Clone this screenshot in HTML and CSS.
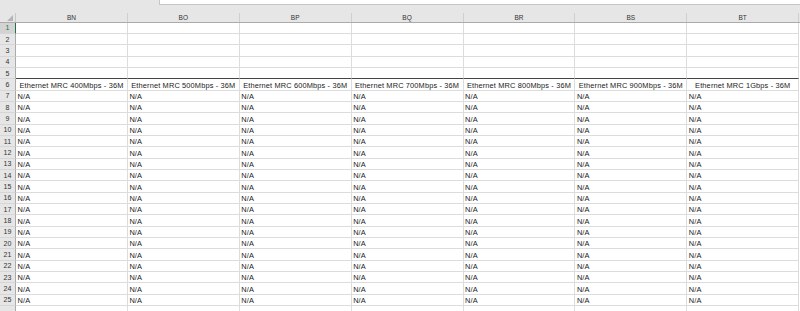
FILE: index.html
```html
<!DOCTYPE html>
<html lang="en">
<head>
  <meta charset="UTF-8">
  <title>Sheet1</title>
  <link rel="stylesheet" href="styles.css">
</head>
<body>
  <!-- formula bar strip -->
  <div class="ribbon">
    <div class="formula"></div>
  </div>

  <!-- column letters -->
  <div class="row colhead">
    <div class="corner">
      <svg width="6" height="6" viewBox="0 0 6 6"><polygon points="6,0 6,6 0,6" fill="#b4b4b4"/></svg>
    </div>
    <div class="col">BN</div><div class="col">BO</div><div class="col">BP</div><div class="col">BQ</div><div class="col">BR</div><div class="col">BS</div><div class="col">BT</div>
  </div>

  <div class="sheet">
    <div class="row"><div class="num active">1</div><div class="cell"></div><div class="cell"></div><div class="cell"></div><div class="cell"></div><div class="cell"></div><div class="cell"></div><div class="cell"></div></div>
    <div class="row"><div class="num">2</div><div class="cell"></div><div class="cell"></div><div class="cell"></div><div class="cell"></div><div class="cell"></div><div class="cell"></div><div class="cell"></div></div>
    <div class="row"><div class="num">3</div><div class="cell"></div><div class="cell"></div><div class="cell"></div><div class="cell"></div><div class="cell"></div><div class="cell"></div><div class="cell"></div></div>
    <div class="row"><div class="num">4</div><div class="cell"></div><div class="cell"></div><div class="cell"></div><div class="cell"></div><div class="cell"></div><div class="cell"></div><div class="cell"></div></div>
    <div class="row ruled"><div class="num">5</div><div class="cell"></div><div class="cell"></div><div class="cell"></div><div class="cell"></div><div class="cell"></div><div class="cell"></div><div class="cell"></div></div>
    <div class="row titles">
      <div class="num">6</div>
      <div class="cell">Ethernet MRC 400Mbps - 36M</div>
      <div class="cell">Ethernet MRC 500Mbps - 36M</div>
      <div class="cell">Ethernet MRC 600Mbps - 36M</div>
      <div class="cell">Ethernet MRC 700Mbps - 36M</div>
      <div class="cell">Ethernet MRC 800Mbps - 36M</div>
      <div class="cell">Ethernet MRC 900Mbps - 36M</div>
      <div class="cell">Ethernet MRC 1Gbps - 36M</div>
    </div>
    <div class="row"><div class="num">7</div><div class="cell">N/A</div><div class="cell">N/A</div><div class="cell">N/A</div><div class="cell">N/A</div><div class="cell">N/A</div><div class="cell">N/A</div><div class="cell">N/A</div></div>
    <div class="row"><div class="num">8</div><div class="cell">N/A</div><div class="cell">N/A</div><div class="cell">N/A</div><div class="cell">N/A</div><div class="cell">N/A</div><div class="cell">N/A</div><div class="cell">N/A</div></div>
    <div class="row"><div class="num">9</div><div class="cell">N/A</div><div class="cell">N/A</div><div class="cell">N/A</div><div class="cell">N/A</div><div class="cell">N/A</div><div class="cell">N/A</div><div class="cell">N/A</div></div>
    <div class="row"><div class="num">10</div><div class="cell">N/A</div><div class="cell">N/A</div><div class="cell">N/A</div><div class="cell">N/A</div><div class="cell">N/A</div><div class="cell">N/A</div><div class="cell">N/A</div></div>
    <div class="row"><div class="num">11</div><div class="cell">N/A</div><div class="cell">N/A</div><div class="cell">N/A</div><div class="cell">N/A</div><div class="cell">N/A</div><div class="cell">N/A</div><div class="cell">N/A</div></div>
    <div class="row"><div class="num">12</div><div class="cell">N/A</div><div class="cell">N/A</div><div class="cell">N/A</div><div class="cell">N/A</div><div class="cell">N/A</div><div class="cell">N/A</div><div class="cell">N/A</div></div>
    <div class="row"><div class="num">13</div><div class="cell">N/A</div><div class="cell">N/A</div><div class="cell">N/A</div><div class="cell">N/A</div><div class="cell">N/A</div><div class="cell">N/A</div><div class="cell">N/A</div></div>
    <div class="row"><div class="num">14</div><div class="cell">N/A</div><div class="cell">N/A</div><div class="cell">N/A</div><div class="cell">N/A</div><div class="cell">N/A</div><div class="cell">N/A</div><div class="cell">N/A</div></div>
    <div class="row"><div class="num">15</div><div class="cell">N/A</div><div class="cell">N/A</div><div class="cell">N/A</div><div class="cell">N/A</div><div class="cell">N/A</div><div class="cell">N/A</div><div class="cell">N/A</div></div>
    <div class="row"><div class="num">16</div><div class="cell">N/A</div><div class="cell">N/A</div><div class="cell">N/A</div><div class="cell">N/A</div><div class="cell">N/A</div><div class="cell">N/A</div><div class="cell">N/A</div></div>
    <div class="row"><div class="num">17</div><div class="cell">N/A</div><div class="cell">N/A</div><div class="cell">N/A</div><div class="cell">N/A</div><div class="cell">N/A</div><div class="cell">N/A</div><div class="cell">N/A</div></div>
    <div class="row"><div class="num">18</div><div class="cell">N/A</div><div class="cell">N/A</div><div class="cell">N/A</div><div class="cell">N/A</div><div class="cell">N/A</div><div class="cell">N/A</div><div class="cell">N/A</div></div>
    <div class="row"><div class="num">19</div><div class="cell">N/A</div><div class="cell">N/A</div><div class="cell">N/A</div><div class="cell">N/A</div><div class="cell">N/A</div><div class="cell">N/A</div><div class="cell">N/A</div></div>
    <div class="row"><div class="num">20</div><div class="cell">N/A</div><div class="cell">N/A</div><div class="cell">N/A</div><div class="cell">N/A</div><div class="cell">N/A</div><div class="cell">N/A</div><div class="cell">N/A</div></div>
    <div class="row"><div class="num">21</div><div class="cell">N/A</div><div class="cell">N/A</div><div class="cell">N/A</div><div class="cell">N/A</div><div class="cell">N/A</div><div class="cell">N/A</div><div class="cell">N/A</div></div>
    <div class="row"><div class="num">22</div><div class="cell">N/A</div><div class="cell">N/A</div><div class="cell">N/A</div><div class="cell">N/A</div><div class="cell">N/A</div><div class="cell">N/A</div><div class="cell">N/A</div></div>
    <div class="row"><div class="num">23</div><div class="cell">N/A</div><div class="cell">N/A</div><div class="cell">N/A</div><div class="cell">N/A</div><div class="cell">N/A</div><div class="cell">N/A</div><div class="cell">N/A</div></div>
    <div class="row"><div class="num">24</div><div class="cell">N/A</div><div class="cell">N/A</div><div class="cell">N/A</div><div class="cell">N/A</div><div class="cell">N/A</div><div class="cell">N/A</div><div class="cell">N/A</div></div>
    <div class="row"><div class="num">25</div><div class="cell">N/A</div><div class="cell">N/A</div><div class="cell">N/A</div><div class="cell">N/A</div><div class="cell">N/A</div><div class="cell">N/A</div><div class="cell">N/A</div></div>
    <!-- row 26 only peeks in at the bottom edge -->
    <div class="row"><div class="num"></div><div class="cell"></div><div class="cell"></div><div class="cell"></div><div class="cell"></div><div class="cell"></div><div class="cell"></div><div class="cell"></div></div>
  </div>
</body>
</html>
```

FILE: styles.css
```css
body {
  margin: 0;
  height: 311px;
  overflow: hidden;
  background: #fff;
  font-family: "Liberation Sans", Arial, sans-serif;
}
.ribbon {
  display: flex;
  align-items: flex-start;
  height: 12.5px;
  padding-left: 159px;
  background: #e6e6e6;
}
.formula {
  flex: 1;
  height: 5px;
  background: #fff;
  border-left: 1px solid #c6c6c6;
  border-bottom: 1px solid #c6c6c6;
  box-sizing: border-box;
}
.row {
  display: grid;
  grid-template-columns: 16px repeat(7, 111.875px);
  height: 11.333px;
}
.colhead {
  height: 10.2px;
  background: #e6e6e6;
  border-bottom: 1px solid #ababab;
  box-sizing: border-box;
}
.corner {
  display: flex;
  align-items: flex-end;
  justify-content: flex-end;
  padding: 0 2px 1px 0;
  border-right: 1px solid #c8c8c8;
}
.col {
  display: flex;
  align-items: center;
  justify-content: center;
  padding-top: 1px;
  border-right: 1px solid #cfcfcf;
  font-size: 6.5px;
  color: #333;
}
.num {
  display: flex;
  align-items: center;
  justify-content: center;
  background: #e6e6e6;
  border-right: 1px solid #ababab;
  border-bottom: 1px solid #d6d6d6;
  box-sizing: border-box;
  font-size: 7px;
  color: #333;
}
.num.active {
  background: #d3d3d3;
  color: #217346;
  border-right-color: #217346;
}
.cell {
  display: flex;
  align-items: flex-end;
  padding: 0 1.5px;
  border-right: 1px solid #dcdcdc;
  border-bottom: 1px solid #dcdcdc;
  box-sizing: border-box;
  font-size: 7.4px;
  letter-spacing: 0.15px;
  color: #1a1a1a;
  white-space: nowrap;
  overflow: hidden;
}
.ruled .cell {
  border-bottom-color: #444;
}
.titles .cell {
  justify-content: center;
}
```
